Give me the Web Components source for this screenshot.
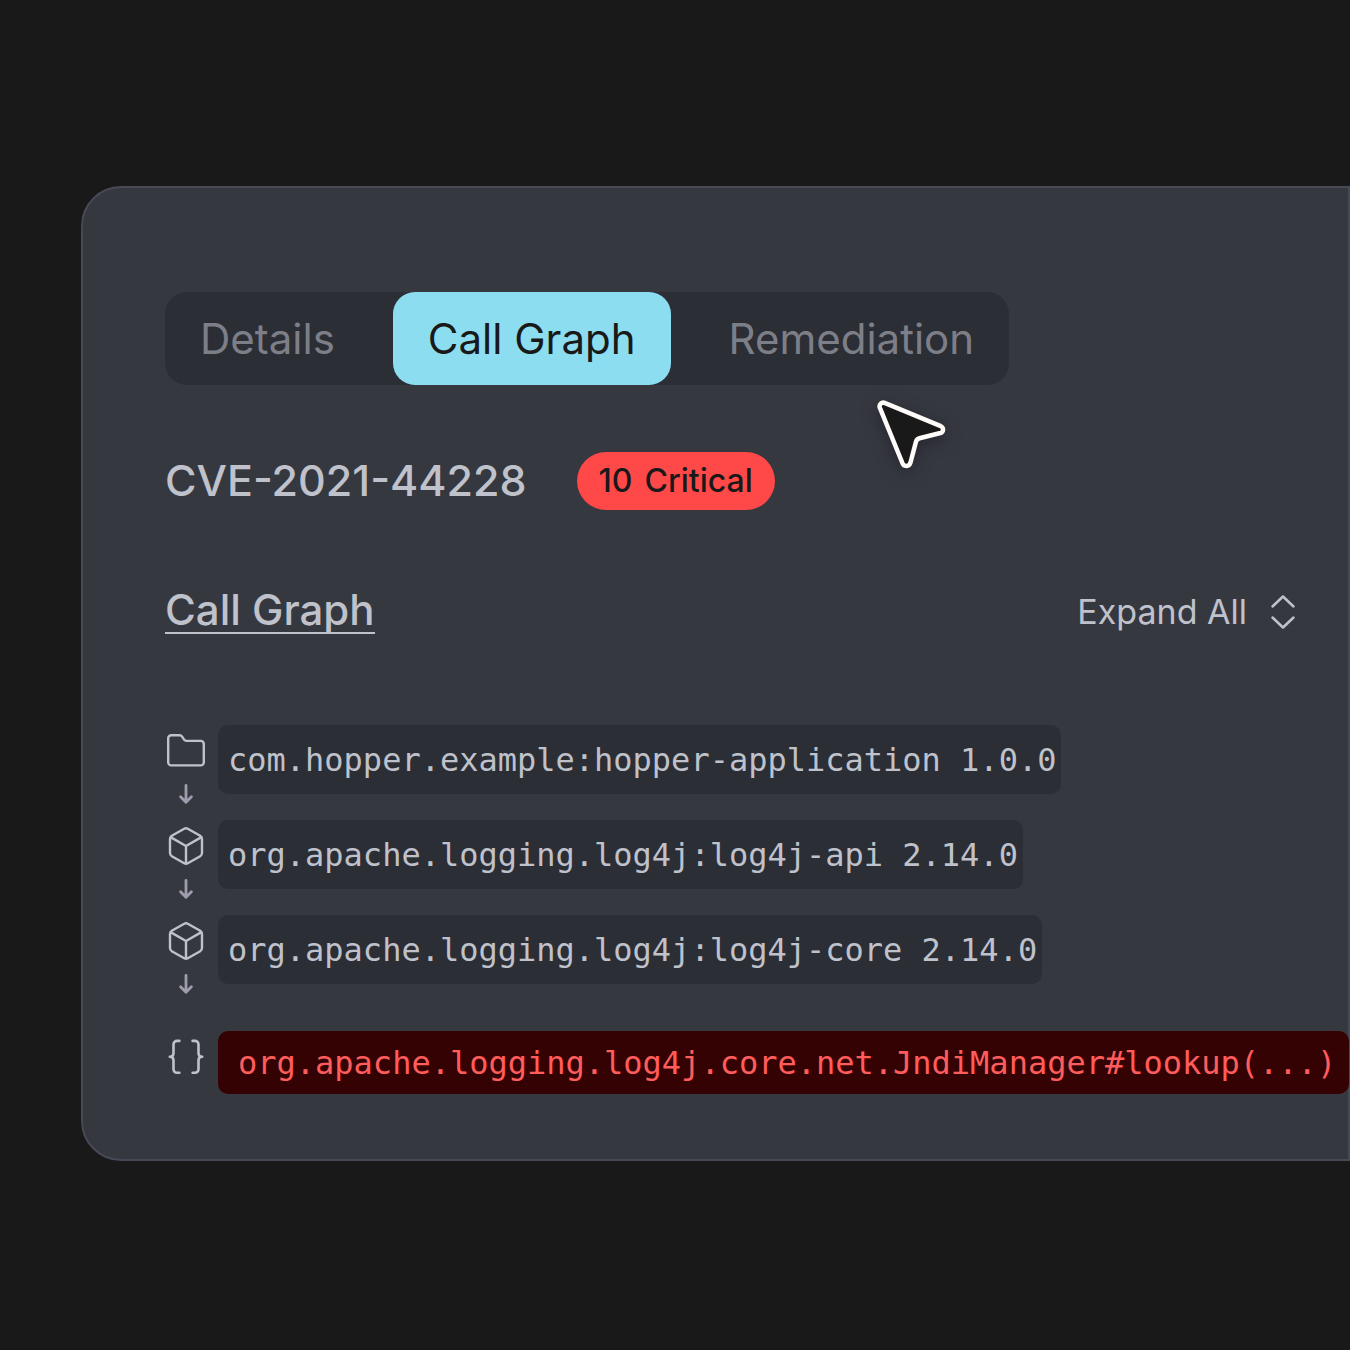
<!DOCTYPE html>
<html lang="en">
<head>
<meta charset="utf-8">
<title>CVE-2021-44228</title>
<style>
  body {
    margin: 0;
    min-height: 100vh;
    background: #19191a;
    color: #bfc1cb;
    font-family: Inter, "Liberation Sans", sans-serif;
    overflow-x: hidden;
  }
</style>
</head>
<body>
<vulnerability-panel>
  <tab-bar slot="tabs">
    <tab-item>Details</tab-item>
    <tab-item active>Call Graph</tab-item>
    <tab-item>Remediation</tab-item>
  </tab-bar>
  <cve-heading slot="heading" score="10" level="Critical">CVE-2021-44228</cve-heading>
  <section-header slot="section">Call Graph</section-header>
  <call-node icon="folder">com.hopper.example:hopper-application 1.0.0</call-node>
  <call-node icon="cube">org.apache.logging.log4j:log4j-api 2.14.0</call-node>
  <call-node icon="cube">org.apache.logging.log4j:log4j-core 2.14.0</call-node>
  <call-node icon="braces" vulnerable>org.apache.logging.log4j.core.net.JndiManager#lookup(...)</call-node>
  <mouse-pointer slot="pointer"></mouse-pointer>
</vulnerability-panel>

<script>
const define = (name, markup, setup) => {
  const template = document.createElement('template');
  template.innerHTML = markup;
  customElements.define(name, class extends HTMLElement {
    connectedCallback() {
      if (this.shadowRoot) return;
      const root = this.attachShadow({ mode: 'open' });
      root.append(template.content.cloneNode(true));
      if (setup) setup(this, root);
    }
  });
};

define('vulnerability-panel', `
  <style>
    :host { display: block; padding: 186px 0 64px 81px; }
    main {
      position: relative;
      padding: 104px 0 65px 82px;
      border: 2px solid #474957;
      border-radius: 40px 0 0 40px;
      background: #363840;
    }
    .heading { margin-top: 67px; }
    .section { margin-top: 77px; padding-right: 52px; }
    .graph { display: flex; flex-direction: column; margin-top: 91px; }
  </style>
  <main>
    <slot name="tabs"></slot>
    <div class="heading"><slot name="heading"></slot></div>
    <div class="section"><slot name="section"></slot></div>
    <div class="graph" role="list"><slot></slot></div>
    <slot name="pointer"></slot>
  </main>
`);

define('tab-bar', `
  <style>
    :host { display: flex; }
    nav {
      display: flex;
      gap: 23px;
      border-radius: 22px;
      background: #2c2e35;
    }
  </style>
  <nav role="tablist"><slot></slot></nav>
`);

define('tab-item', `
  <style>
    :host { display: block; }
    button {
      display: block;
      height: 93px;
      padding: 0 35px;
      border: 0;
      border-radius: 22px;
      background: none;
      color: #7d7f88;
      font: 400 42px/48px Inter, "Liberation Sans", sans-serif;
      white-space: nowrap;
      cursor: pointer;
    }
    :host([active]) button { background: #8cddf0; color: #19191a; }
  </style>
  <button type="button" role="tab"><slot></slot></button>
`, (host, root) => {
  root.querySelector('button').setAttribute('aria-selected', host.hasAttribute('active'));
});

define('cve-heading', `
  <style>
    :host { display: flex; align-items: center; gap: 50px; }
    h1 { margin: 0; padding-bottom: 2px; font-size: 43px; line-height: 48px; font-weight: 500; }
    .badge {
      display: flex;
      gap: 12px;
      padding: 0 22px;
      border-radius: 29px;
      background: #ff4949;
      color: #19191a;
      font-size: 32px;
      line-height: 58px;
      font-weight: 500;
    }
  </style>
  <h1><slot></slot></h1>
  <div class="badge"><span class="score"></span><span class="level"></span></div>
`, (host, root) => {
  root.querySelector('.score').textContent = host.getAttribute('score');
  root.querySelector('.level').textContent = host.getAttribute('level');
});

define('section-header', `
  <style>
    :host { display: flex; align-items: flex-end; justify-content: space-between; }
    h2 {
      margin: 0;
      border-bottom: 2px solid #bfc1cb;
      font-size: 42px;
      line-height: 45px;
      font-weight: 500;
    }
    button {
      display: flex;
      align-items: center;
      gap: 23px;
      height: 44px;
      padding: 0;
      border: 0;
      background: none;
      color: inherit;
      font: 400 34px/44px Inter, "Liberation Sans", sans-serif;
      cursor: pointer;
    }
    svg { display: block; }
  </style>
  <h2><slot></slot></h2>
  <button type="button">Expand All
    <svg width="26" height="36" viewBox="0 0 26 36" fill="none" stroke="currentColor" stroke-width="2.5" stroke-linecap="round" stroke-linejoin="round" aria-hidden="true">
      <path d="M2.5 12.5 13 2.5l10.5 10M2.5 23.5l10.5 10 10.5-10"/>
    </svg>
  </button>
`);

const nodeIcons = {
  folder: '<svg viewBox="0 0 40 40" stroke-width="2.4"><path d="M5.2 4.3h8.4a3 3 0 0 1 2.5 1.3l2 3a3 3 0 0 0 2.5 1.3h14.2a3 3 0 0 1 3 3v18.5a3 3 0 0 1-3 3H5.2a3 3 0 0 1-3-3V7.3a3 3 0 0 1 3-3Z"/></svg>',
  cube: '<svg viewBox=".75 .75 22.5 22.5" stroke-width="1.35"><path d="M21 8a2 2 0 0 0-1-1.73l-7-4a2 2 0 0 0-2 0l-7 4A2 2 0 0 0 3 8v8a2 2 0 0 0 1 1.73l7 4a2 2 0 0 0 2 0l7-4A2 2 0 0 0 21 16ZM3.3 7l8.7 5 8.7-5M12 22V12"/></svg>',
  braces: '<svg viewBox="0 0 40 40" stroke-width="2.6"><path d="M13.4 3.9H11a3.5 3.5 0 0 0-3.5 3.5v8.8c0 2.4-1.2 3.6-3.7 3.6 2.5 0 3.7 1.2 3.7 3.6v8.9a3.500 3.500 0 0 0 3.5 3.5h2.4M26.600 3.9H29a3.5 3.5 0 0 1 3.5 3.5v8.8c0 2.4 1.2 3.6 3.7 3.6-2.5 0-3.7 1.2-3.7 3.6v8.9a3.5 3.5 0 0 1-3.5 3.5h-2.4"/></svg>'
};

define('call-node', `
  <style>
    :host { display: flex; align-items: flex-start; gap: 11px; min-height: 95px; }
    :host([vulnerable]) { min-height: 0; margin-top: 21px; }
    .rail {
      display: flex;
      flex: none;
      flex-direction: column;
      align-items: center;
      gap: 11px;
      width: 42px;
      padding-top: 6px;
    }
    svg {
      display: block;
      width: 40px;
      height: 40px;
      fill: none;
      stroke: #bfc1cb;
      stroke-linecap: round;
      stroke-linejoin: round;
    }
    .arrow { width: 24px; height: 24px; stroke: #9d9dad; }
    :host([vulnerable]) .arrow { display: none; }
    code {
      flex: none;
      padding: 2px 5px 0 10px;
      border-radius: 10px;
      background: #2c2e35;
      font: 32px/67px "DejaVu Sans Mono", monospace;
      white-space: nowrap;
    }
    :host([vulnerable]) code {
      padding: 2px 13px 0 20px;
      background: #340203;
      color: #ff5c5c;
      line-height: 61px;
    }
  </style>
  <div class="rail" aria-hidden="true">
    <div class="icon"></div>
    <svg class="arrow" viewBox="0 0 24 24" stroke-width="2.8"><path d="M12 3.5v16.8M6.6 14.8l5.4 5.5 5.4-5.5"/></svg>
  </div>
  <code><slot></slot></code>
`, (host, root) => {
  host.setAttribute('role', 'listitem');
  root.querySelector('.icon').innerHTML = nodeIcons[host.getAttribute('icon')];
});

define('mouse-pointer', `
  <style>
    :host { position: absolute; left: 787px; top: 205px; pointer-events: none; }
    svg { display: block; overflow: visible; filter: drop-shadow(0 4px 8px rgb(20 18 30 / .5)); }
  </style>
  <svg width="82" height="82" viewBox="0 0 82 82" fill="#19191a" stroke="#fffcf9" stroke-width="4.5" stroke-linejoin="round" aria-hidden="true">
    <path d="M15.2 10.1 70.8 33.2c3.2 1.5 2.900 5.900-.4 6.8L49.5 45.2c-2 .5-3 1.5-3.5 3.4L40.3 70.2c-1.1 3.5-6.3 3.7-7.7.3L10 15.2c-1.5-3.7 1.7-6.7 5.2-5.1Z"/>
  </svg>
`);
</script>
</body>
</html>
